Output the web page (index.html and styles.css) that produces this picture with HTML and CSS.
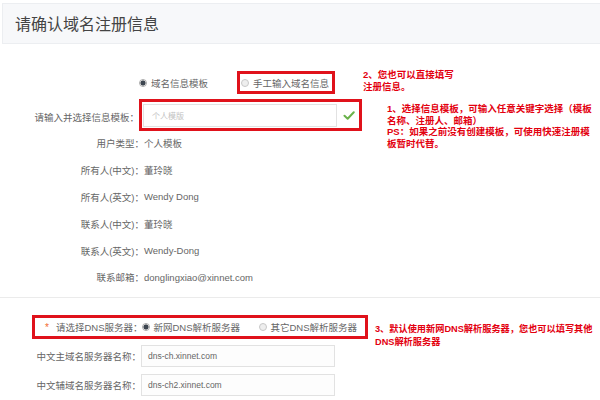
FILE: index.html
```html
<!DOCTYPE html>
<html lang="zh-CN">
<head>
<meta charset="utf-8">
<title>请确认域名注册信息</title>
<link rel="stylesheet" href="styles.css">
</head>
<body>
<div class="page">
  <div class="header"><h1 class="title">请确认域名注册信息</h1></div>

  <div class="form">
    <div class="radio-row">
      <label class="opt"><span class="radio on"></span>域名信息模板</label>
      <label class="opt boxed"><span class="radio"></span>手工输入域名信息</label>
    </div>

    <div class="tpl-row">
      <span class="label">请输入并选择信息模板：</span>
      <div class="redbox tpl">
        <div class="field placeholder">个人模版</div>
        <div class="check-cell">
          <svg class="check" width="12" height="9" viewBox="0 0 13 10"><path d="M1.5 5.2 L5 8.6 L11.8 1.4" fill="none" stroke="#6ab24a" stroke-width="2.2" stroke-linecap="round" stroke-linejoin="round"/></svg>
        </div>
      </div>
    </div>

    <div class="info">
      <div class="info-row"><span class="label">用户类型：</span><span class="value">个人模板</span></div>
      <div class="info-row"><span class="label">所有人(中文)：</span><span class="value">董玲晓</span></div>
      <div class="info-row"><span class="label">所有人(英文)：</span><span class="value">Wendy Dong</span></div>
      <div class="info-row"><span class="label">联系人(中文)：</span><span class="value">董玲晓</span></div>
      <div class="info-row"><span class="label">联系人(英文)：</span><span class="value">Wendy-Dong</span></div>
      <div class="info-row"><span class="label">联系邮箱：</span><span class="value">donglingxiao@xinnet.com</span></div>
    </div>
  </div>

  <div class="divider"></div>

  <div class="dns">
    <div class="redbox dns-box">
      <span class="star">*</span>
      <span class="dns-label">请选择DNS服务器：</span>
      <label class="opt tight"><span class="radio on"></span>新网DNS解析服务器</label>
      <label class="opt tight push"><span class="radio"></span>其它DNS解析服务器</label>
    </div>
    <div class="srv-row first">
      <span class="label">中文主域名服务器名称：</span>
      <div class="field srv">dns-ch.xinnet.com</div>
    </div>
    <div class="srv-row">
      <span class="label">中文辅域名服务器名称：</span>
      <div class="field srv">dns-ch2.xinnet.com</div>
    </div>
  </div>

  <div class="note n2">
    <div class="ln">2、您也可以直接填写</div>
    <div class="ln">注册信息。</div>
  </div>
  <div class="note n1">
    <div class="ln">1、选择信息模板，可输入任意关键字选择（模板</div>
    <div class="ln">名称、注册人、邮箱）</div>
    <div class="ln">PS：如果之前没有创建模板，可使用快速注册模</div>
    <div class="ln">板暂时代替。</div>
  </div>
  <div class="note n3">
    <div class="ln">3、默认使用新网DNS解析服务器，您也可以填写其他</div>
    <div class="ln">DNS解析服务器</div>
  </div>
</div>
</body>
</html>
```
FILE: styles.css
```css
* { box-sizing: border-box; }

body {
  margin: 0;
  background: #fff;
  font-family: "Liberation Sans", "Noto Sans CJK SC", sans-serif;
  font-size: 9.5px;
  color: #666;
}

.page {
  position: relative;
  width: 600px;
  height: 400px;
  overflow: hidden;
}

.header {
  margin: 3px 0 0 2px;
  height: 41px;
  background: #f7f8fa;
  border: 1px solid #eceef1;
  border-right: 0;
}

.title {
  margin: 0;
  padding: 2px 0 0 12px;
  font-size: 16px;
  font-weight: normal;
  line-height: 37px;
  color: #444;
  font-family: "Liberation Sans", "Noto Sans CJK SC", sans-serif;
}

.radio-row {
  display: flex;
  align-items: center;
  height: 23px;
  margin: 27px 0 0 139px;
}

.opt {
  display: flex;
  align-items: center;
  gap: 4px;
  white-space: nowrap;
  color: #666;
}

.radio {
  width: 8px;
  height: 8px;
  border-radius: 50%;
  border: 1px solid #c8c8c8;
  background: #eee;
  flex: none;
}

.radio.on {
  border-color: #aaa;
  background: radial-gradient(circle, #3d4650 0 2.3px, #f2f2f2 2.8px);
}

.boxed {
  margin-left: 29px;
  height: 23px;
  border: 3px solid #e0121b;
  padding: 0 3px 0 1px;
}

.tpl-row {
  display: flex;
  align-items: center;
  margin-top: 5px;
  height: 32px;
}

.label {
  flex: none;
  text-align: right;
  white-space: nowrap;
  color: #666;
}

.tpl-row .label { width: 139px; padding-top: 3px; }

.redbox {
  border: 3px solid #e0121b;
}

.tpl {
  display: flex;
  width: 223px;
  height: 32px;
  padding: 2px 0 1px 1px;
}

.field {
  width: 194px;
  border: 1px solid #e2e2e2;
  background: #fff;
  padding-left: 8px;
  display: flex;
  align-items: center;
  white-space: nowrap;
}

.placeholder {
  color: #c2c2c2;
  font-size: 8px;
}

.check-cell {
  flex: 1;
  display: flex;
  align-items: center;
  justify-content: center;
  padding-left: 2px;
}

.info { margin-top: -1px; }

.info-row {
  display: flex;
  align-items: center;
  height: 26.8px;
}

.info-row .label { width: 144px; }

.value { white-space: nowrap; }

.divider {
  height: 1px;
  background: #ebebeb;
  margin-top: 6px;
}

.dns-box {
  display: flex;
  align-items: center;
  margin: 17px 0 0 32px;
  width: 336px;
  height: 24px;
  padding: 0 8px 0 10px;
}

.star {
  color: #f26a2e;
  font-size: 10px;
  margin-right: 7px;
  padding-top: 2px;
}

.dns-label { white-space: nowrap; }

.tight { gap: 3px; }

.push { margin-left: auto; }

.srv-row {
  display: flex;
  align-items: center;
  height: 22px;
  margin-top: 7px;
}

.srv-row.first { margin-top: 6px; }

.srv-row .label { width: 141px; }

.field.srv {
  height: 22px;
  padding-left: 6px;
  font-size: 8.5px;
  color: #666;
  background: #fdfdfd;
}

.note {
  position: absolute;
  color: #e3000f;
  font-family: "Liberation Sans", "Noto Sans CJK SC", sans-serif;
  font-weight: 700;
  font-size: 9.5px;
  white-space: nowrap;
}

.note .ln {
  height: 11.5px;
  line-height: 11.5px;
}

.n2 { left: 363px; top: 69px; }
.n1 { left: 387px; top: 103px; }
.n3 { left: 375px; top: 323px; font-size: 9.2px; }
.n3 .ln { height: 12.5px; line-height: 12.5px; }
```
